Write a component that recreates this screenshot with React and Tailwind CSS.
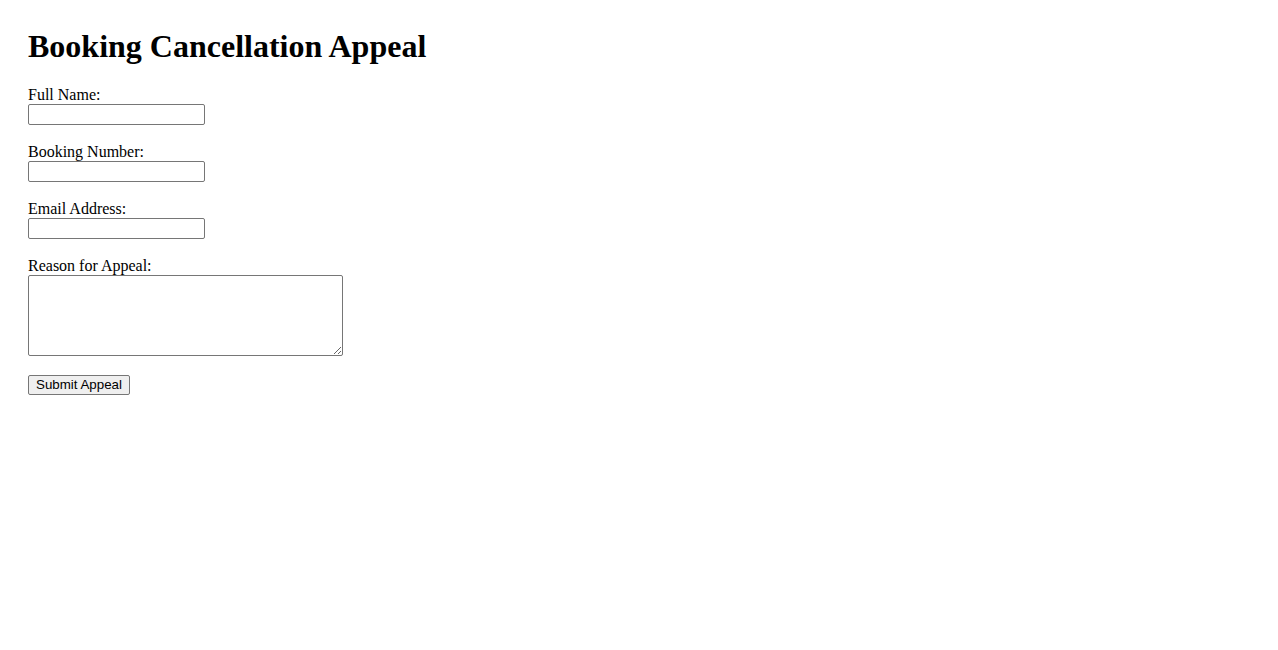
export default function App() {
  const fields = [
    { id: 'name', label: 'Full Name:' },
    { id: 'booking', label: 'Booking Number:' },
    { id: 'email', label: 'Email Address:' },
  ];

  return (
    <div className="min-h-[650px] bg-white p-[28px] text-black font-['Liberation_Serif',serif]">
      <h1 className="text-[32px] font-bold leading-[37px] mb-[21px]">Booking Cancellation Appeal</h1>
      <form onSubmit={(e) => e.preventDefault()}>
        {fields.map((f) => (
          <div key={f.id} className="mb-[18px]">
            <label htmlFor={f.id} className="block text-[16px] leading-[18px]">{f.label}</label>
            <input
              id={f.id}
              type="text"
              className="block w-[177px] h-[21px] border border-[#767676] rounded-[2px] px-[2px] text-[13px] font-['Liberation_Sans',sans-serif]"
            />
          </div>
        ))}
        <div className="mb-[19px]">
          <label htmlFor="reason" className="block text-[16px] leading-[18px]">Reason for Appeal:</label>
          <textarea
            id="reason"
            className="block w-[315px] h-[81px] border border-[#767676] rounded-[2px] p-[2px] text-[13px] font-['Liberation_Mono',monospace]"
          />
        </div>
        <button
          type="submit"
          className="block w-[102px] h-[20px] bg-[#efefef] border border-[#767676] rounded-[2px] text-[13.33px] leading-[16px] font-['Liberation_Sans',sans-serif]"
        >
          Submit Appeal
        </button>
      </form>
    </div>
  );
}
